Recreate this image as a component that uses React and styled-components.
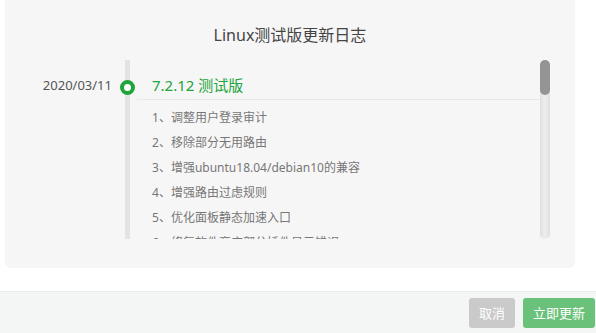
import React from 'react'
import styled, { createGlobalStyle } from 'styled-components'

const GlobalStyle = createGlobalStyle`
  html, body {
    margin: 0;
    padding: 0;
    background: #fff;
    font-family: "Noto Sans", "Noto Sans CJK SC", sans-serif;
  }
`

const Page = styled.div`
  width: 596px;
  height: 333px;
  display: flex;
  flex-direction: column;
  overflow: hidden;
`

const Panel = styled.div`
  margin: 0 21px 0 5px;
  padding: 24px 25px 29px 0;
  background: #f6f6f6;
  border-radius: 0 0 6px 6px;
`

const Title = styled.h3`
  margin: 0 0 14px 25px;
  font-size: 16px;
  font-weight: 400;
  line-height: 22px;
  color: #444;
  text-align: center;
`

const LogArea = styled.div`
  display: flex;
  height: 179px;
`

const ScrollBox = styled.div`
  flex: 1;
  overflow: hidden;
`

const Track = styled.div`
  width: 10px;
  border-radius: 5px;
  background: linear-gradient(90deg, #dedede, #ececec 40%, #ececec 60%, #dedede);
`

const Thumb = styled.div`
  height: 35px;
  border-radius: 5px;
  background: #949494;
`

const Entry = styled.div`
  display: grid;
  grid-template-columns: 120px 1fr;
`

const Date = styled.div`
  padding: 14px 13px 0 0;
  font-size: 13px;
  line-height: 22px;
  color: #555;
  text-align: right;
`

const Body = styled.div`
  position: relative;
  border-left: 5px solid #e3e3e3;
`

const Dot = styled.span`
  position: absolute;
  top: 20px;
  left: -10px;
  width: 7px;
  height: 7px;
  border: 4px solid #20a53a;
  border-radius: 50%;
  background: #fff;
`

const Version = styled.div`
  margin-left: 7px;
  padding: 14px 0 3px 15px;
  font-size: 15px;
  line-height: 22px;
  color: #20a53a;
  border-bottom: 1px solid #e8e8e8;
`

const List = styled.ul`
  margin: 0;
  padding: 5px 0 10px 22px;
  list-style: none;
`

const Item = styled.li`
  font-size: 12px;
  line-height: 25px;
  color: #777;
  white-space: nowrap;
`

const Footer = styled.div`
  margin-top: auto;
  height: 41px;
  border-top: 1px solid #e9edeb;
  background: #f4f6f5;
  display: flex;
  justify-content: flex-end;
  align-items: center;
  gap: 8px;
  padding-right: 1px;
`

const Button = styled.button`
  height: 30px;
  min-width: ${p => (p.primary ? '70px' : '46px')};
  padding: 0 10px;
  border: none;
  border-radius: 3px;
  background: ${p => (p.primary ? '#6ac27a' : '#cacaca')};
  color: #fff;
  font-family: "Noto Sans", "Noto Sans CJK SC", sans-serif;
  font-size: 13px;
`

const logs = [
  {
    date: '2020/03/11',
    version: '7.2.12 测试版',
    items: [
      '调整用户登录审计',
      '移除部分无用路由',
      '增强ubuntu18.04/debian10的兼容',
      '增强路由过虑规则',
      '优化面板静态加速入口',
      '修复软件商店部分插件显示错误',
      '修复文件管理器部分目录无法访问',
      '其它细节优化',
    ],
  },
  {
    date: '2020/02/26',
    version: '7.2.11 测试版',
    items: [
      '优化面板登录流程',
      '修复计划任务部分问题',
      '修复网站备份异常',
      '增强安全入口检测',
      '修复已知BUG',
    ],
  },
]

export default function App() {
  return (
    <Page>
      <GlobalStyle />
      <Panel>
        <Title>Linux测试版更新日志</Title>
        <LogArea>
          <ScrollBox>
            {logs.map(log => (
              <Entry key={log.version}>
                <Date>{log.date}</Date>
                <Body>
                  <Dot />
                  <Version>{log.version}</Version>
                  <List>
                    {log.items.map((text, i) => (
                      <Item key={i}>{i + 1}、{text}</Item>
                    ))}
                  </List>
                </Body>
              </Entry>
            ))}
          </ScrollBox>
          <Track>
            <Thumb />
          </Track>
        </LogArea>
      </Panel>
      <Footer>
        <Button>取消</Button>
        <Button primary>立即更新</Button>
      </Footer>
    </Page>
  )
}
